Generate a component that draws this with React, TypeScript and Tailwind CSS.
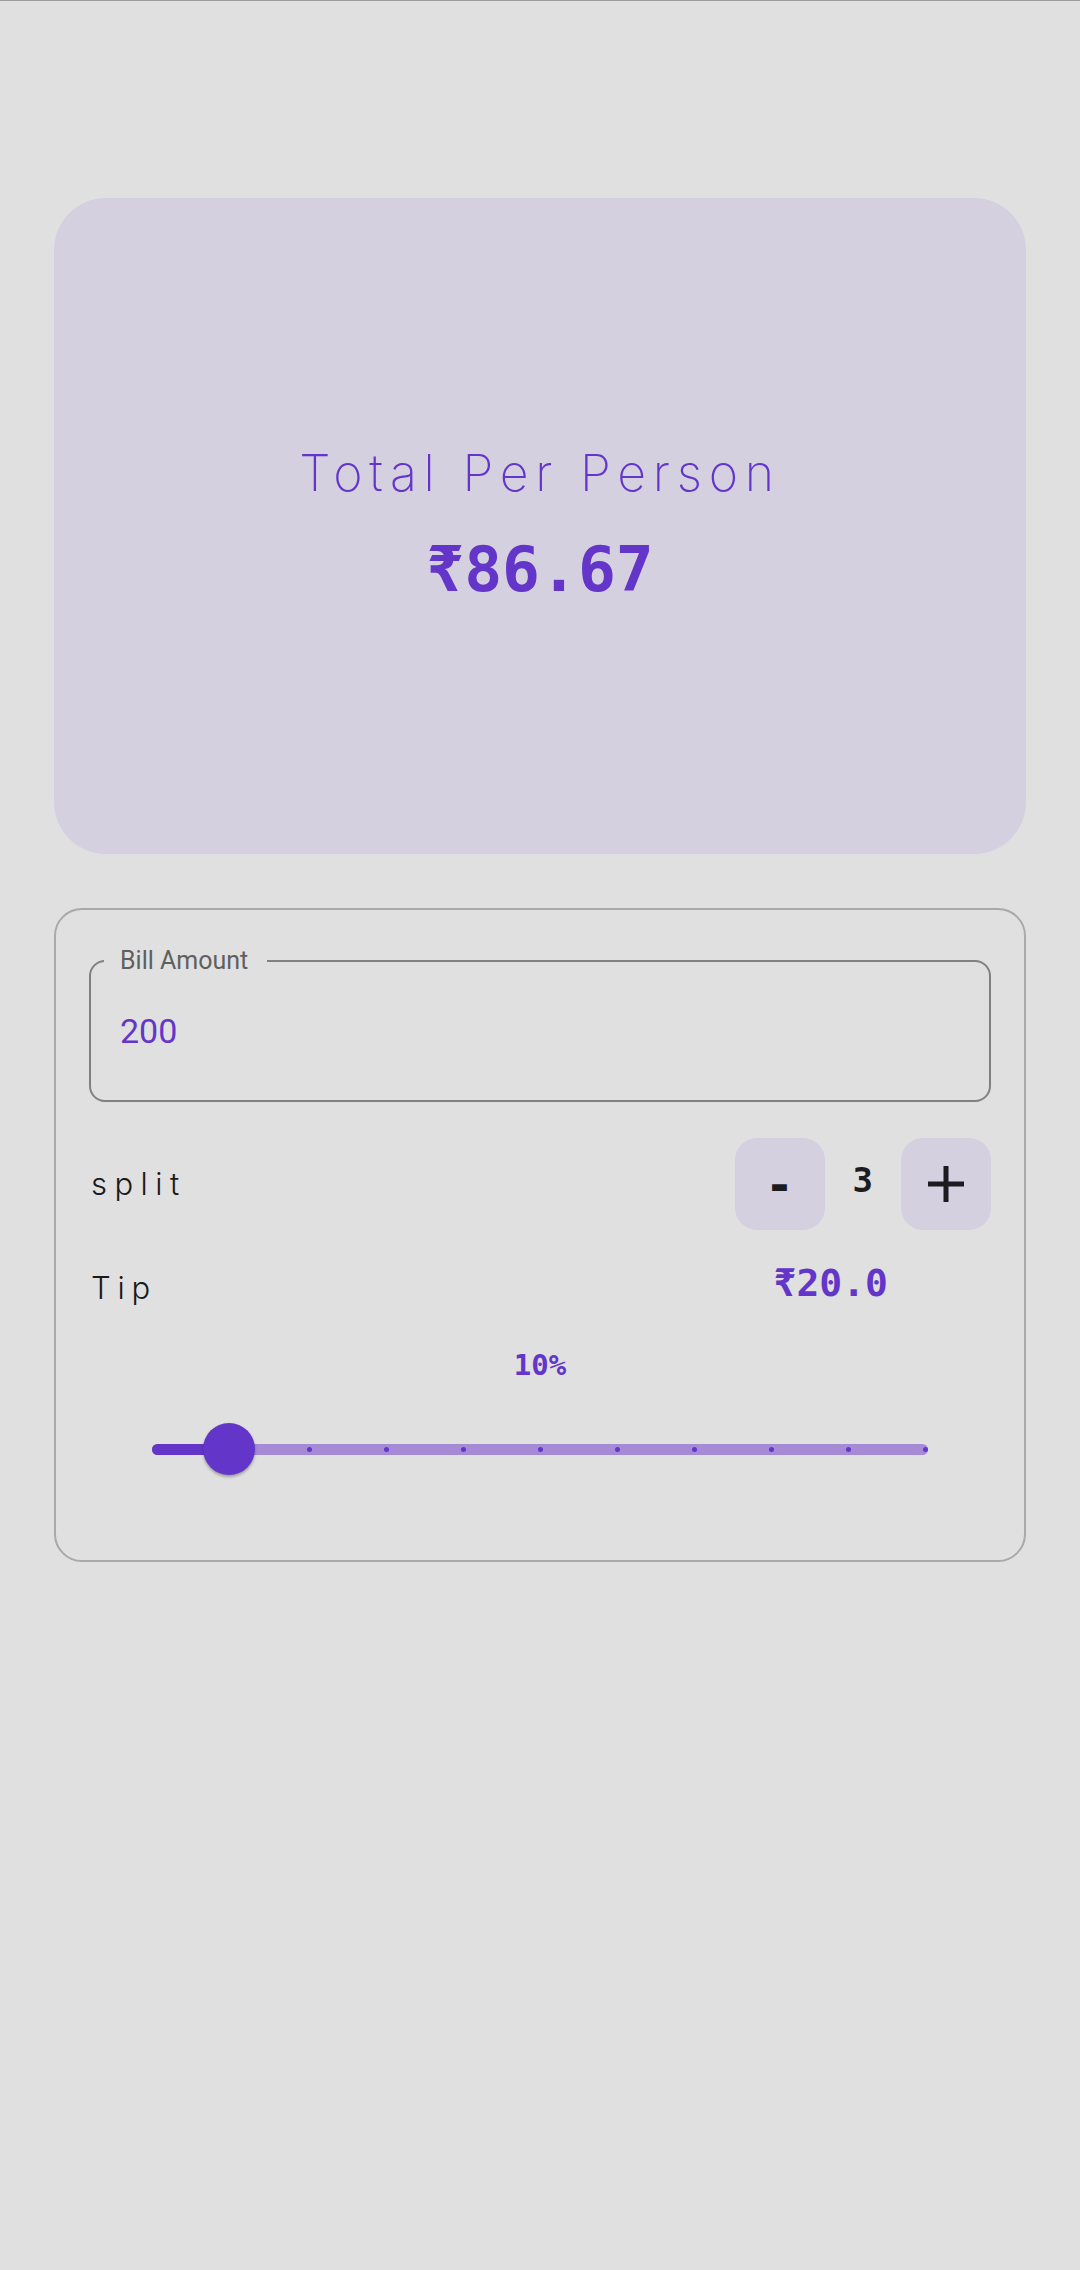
import React from "react";

const dots = [2, 3, 4, 5, 6, 7, 8, 9, 10];

export default function App() {
  const trackW = 776;
  const pad = 3;
  const step = (trackW - pad * 2) / 10;
  const thumbX = 77;
  return (
    <div className="min-h-[2270px] w-[1080px] bg-[#e0e0e0]" style={{ fontFamily: "Inter, 'Noto Sans', sans-serif" }}>
      <div className="h-[1px] w-full bg-[#9a9a9a]" />
      <div className="px-[54px] pt-[197px]">
        {/* Result card */}
        <div className="flex h-[656px] flex-col items-center justify-center rounded-[52px] bg-[#d4d0e0] pb-[4px]">
          <div className="text-[50px] font-extralight leading-none tracking-[0.135em] text-[#6336c9]">Total Per Person</div>
          <div
            className="mt-[40px] text-[63px] font-bold leading-none text-[#6336c9]"
            style={{ fontFamily: "'DejaVu Sans Mono', 'Noto Sans', monospace" }}
          >
            ₹86.67
          </div>
        </div>

        {/* Form card */}
        <div className="mt-[54px] h-[654px] rounded-[28px] border-2 border-[#a9a9a9] px-[33px] pt-[50px]">
          <div className="relative flex h-[142px] items-center rounded-[16px] border-2 border-[#808080] pl-[29px]">
            <span
              className="absolute left-[13px] top-[-16px] bg-[#e0e0e0] pl-[16px] pr-[19px] text-[25px] leading-[30px] text-[#5f5f5f]"
              style={{ fontFamily: "Roboto, sans-serif" }}
            >
              Bill Amount
            </span>
            <span className="text-[34px] leading-none text-[#6336c9]" style={{ fontFamily: "Roboto, sans-serif" }}>
              200
            </span>
          </div>

          <div className="mt-[36px] flex h-[92px] items-center justify-between">
            <span className="pl-[2px] text-[31px] font-light tracking-[0.24em] text-[#1a1a1a]">split</span>
            <div className="flex items-center">
              <div
                className="flex h-[92px] w-[90px] items-center justify-center rounded-[22px] bg-[#d4d0e0] text-[48px] font-bold text-[#1c1b1f]"
                style={{ fontFamily: "'DejaVu Sans Mono', monospace" }}
              >
                -
              </div>
              <div
                className="mx-[28px] mb-[8px] text-[34px] font-semibold leading-none text-[#1c1b1f]"
                style={{ fontFamily: "'DejaVu Sans Mono', monospace" }}
              >
                3
              </div>
              <div className="flex h-[92px] w-[90px] items-center justify-center rounded-[22px] bg-[#d4d0e0]">
                <svg width="36" height="36" viewBox="0 0 36 36">
                  <rect x="15.5" y="0" width="5" height="36" fill="#1c1b1f" />
                  <rect x="0" y="15.5" width="36" height="5" fill="#1c1b1f" />
                </svg>
              </div>
            </div>
          </div>

          <div className="mt-[38px] flex h-[40px] items-center justify-between">
            <span className="pl-[2px] text-[31px] font-light tracking-[0.22em] text-[#1a1a1a]">Tip</span>
            <span
              className="mb-[10px] mr-[103px] text-[38px] font-bold leading-none text-[#6336c9]"
              style={{ fontFamily: "'DejaVu Sans Mono', 'Noto Sans', monospace" }}
            >
              ₹20.0
            </span>
          </div>

          <div
            className="mt-[43px] text-center text-[29px] font-bold leading-none text-[#6336c9]"
            style={{ fontFamily: "'DejaVu Sans Mono', monospace" }}
          >
            10%
          </div>

          <div className="mt-[43px] flex justify-center">
            <div className="relative h-[52px]" style={{ width: trackW }}>
              <div className="absolute left-0 right-0 top-[20.5px] h-[11px] rounded-full bg-[#a58bd6]" />
              <div className="absolute left-0 top-[20.5px] h-[11px] rounded-l-full bg-[#6336c9]" style={{ width: thumbX }} />
              {dots.map((d) => (
                <div
                  key={d}
                  className="absolute top-[23.5px] h-[5px] w-[5px] rounded-full bg-[#6336c9]"
                  style={{ left: pad + step * d - 2.5 }}
                />
              ))}
              <div
                className="absolute top-0 h-[52px] w-[52px] rounded-full bg-[#6336c9] shadow-[0_2px_3px_rgba(0,0,0,0.3)]"
                style={{ left: thumbX - 26 }}
              />
            </div>
          </div>
        </div>
      </div>
    </div>
  );
}
